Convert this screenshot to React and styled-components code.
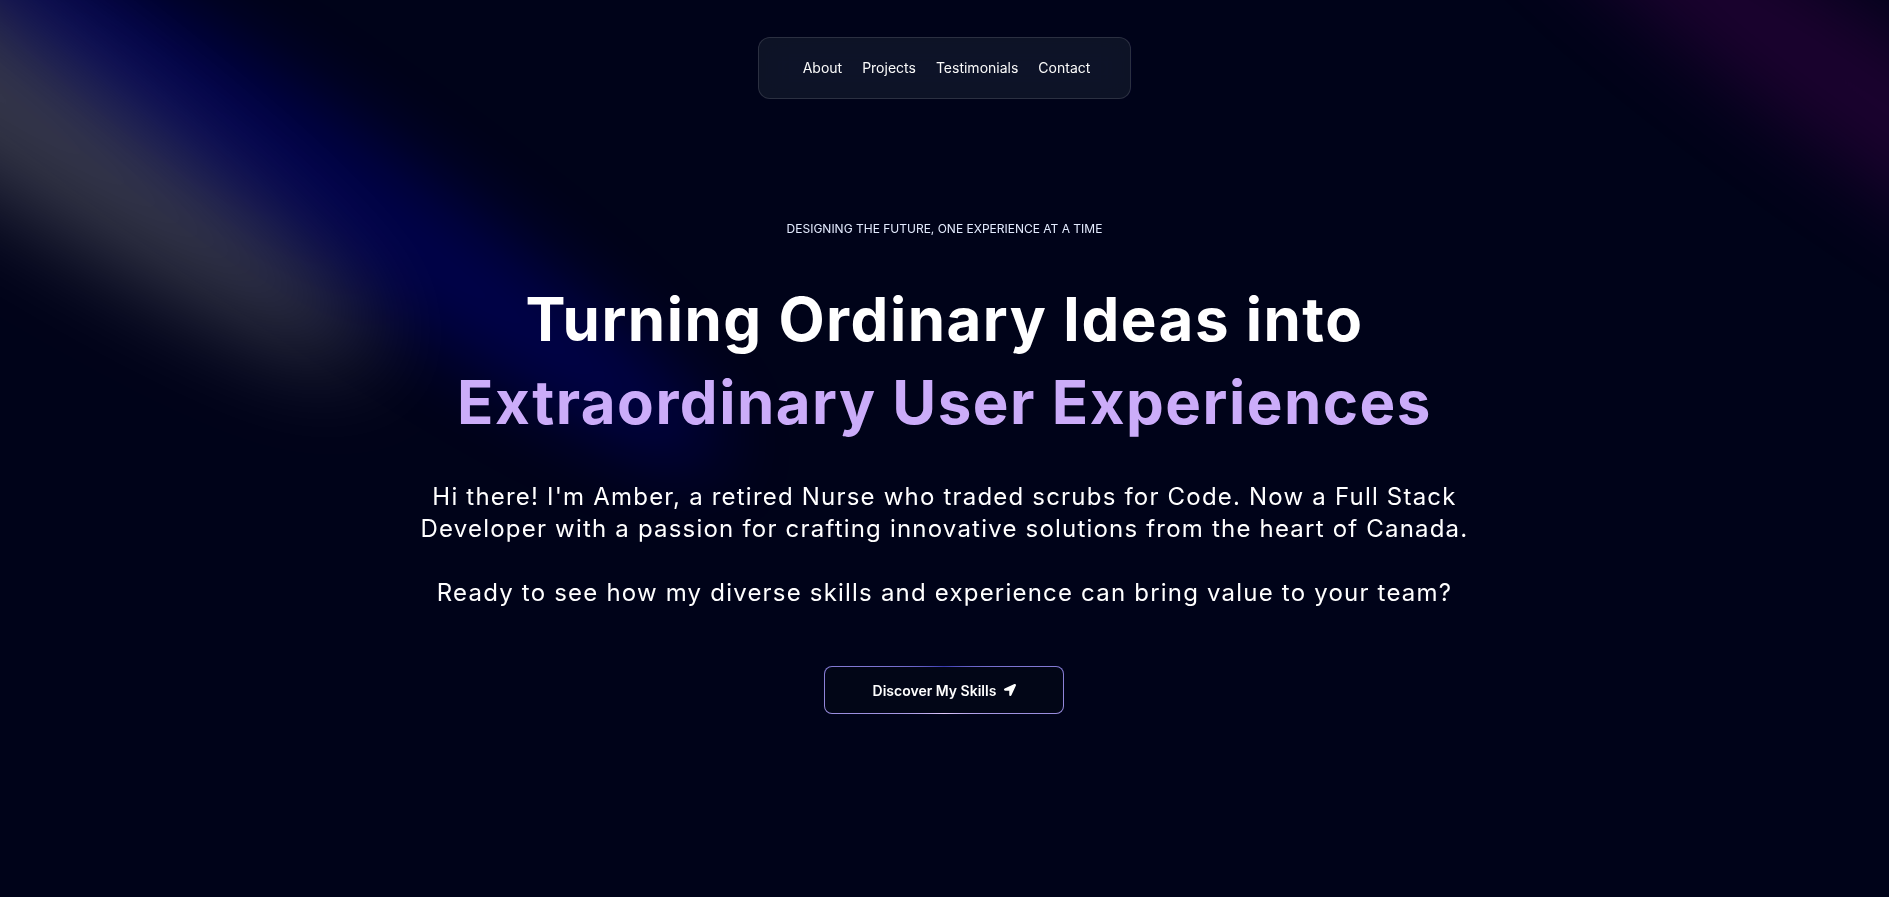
import React from 'react';
import styled, { createGlobalStyle } from 'styled-components';
import { FaLocationArrow } from 'react-icons/fa';

const GlobalStyle = createGlobalStyle`
    * {
        box-sizing: border-box;
    }
    html, body {
        margin: 0;
        padding: 0;
        background: #000319;
    }
    body {
        font-family: Inter, "Noto Sans", sans-serif;
        color: #fff;
    }
`;

const Page = styled.main`
    position: relative;
    width: 100%;
    height: 100vh;
    overflow: hidden;
    background: #000319;
    display: flex;
    flex-direction: column;
    align-items: center;
`;

const SpotSvg = styled.svg`
    position: absolute;
    z-index: 1;
    pointer-events: none;
    top: ${({ $top }) => $top};
    left: ${({ $left }) => $left};
    width: 84%;
    height: ${({ $h }) => $h};
    transform: translate(-50%, -40%);
`;

const Nav = styled.nav`
    position: relative;
    z-index: 20;
    margin-top: 37px;
    display: flex;
    align-items: center;
    justify-content: center;
    gap: 20px;
    padding: 20px 40px 20px 44px;
    border: 1px solid rgba(255, 255, 255, 0.125);
    border-radius: 12px;
    background: rgba(17, 25, 40, 0.75);
    backdrop-filter: blur(16px) saturate(180%);
`;

const NavLink = styled.a`
    font-size: 14px;
    line-height: 20px;
    color: #fafafa;
    text-decoration: none;
    cursor: pointer;
`;

const Hero = styled.section`
    position: relative;
    z-index: 10;
    display: flex;
    flex-direction: column;
    align-items: center;
    max-width: 60vw;
    margin-top: 122px;
`;

const Tagline = styled.p`
    margin: 0;
    font-size: 12px;
    line-height: 16px;
    text-transform: uppercase;
    text-align: center;
    color: #e4ecff;
`;

const Heading = styled.h1`
    margin: 41px 0 0;
    font-size: 60px;
    font-weight: 700;
    line-height: 1.375;
    letter-spacing: 0.025em;
    text-align: center;
    color: #fff;
`;

const Accent = styled.span`
    color: #cbacf9;
`;

const Intro = styled.p`
    margin: 38px 0 0;
    font-size: 24px;
    line-height: 32px;
    letter-spacing: 0.05em;
    text-align: center;
    color: #fff;
`;

const MagicButton = styled.button`
    position: relative;
    margin-top: 57px;
    width: 240px;
    height: 48px;
    padding: 1px;
    border: none;
    border-radius: 8px;
    overflow: hidden;
    cursor: pointer;
    background: conic-gradient(from 180deg at 50% 50%, #e2cbff 0%, #393bb2 50%, #e2cbff 100%);
`;

const ButtonInner = styled.span`
    display: flex;
    align-items: center;
    justify-content: center;
    gap: 8px;
    width: 100%;
    height: 100%;
    padding: 0 28px;
    border-radius: 7px;
    background: #020617;
    color: #fff;
    font-family: Inter, sans-serif;
    font-size: 14px;
    font-weight: 600;
`;

const Spotlight = ({ id, fill, top, left, h }) => (
    <SpotSvg $top={top} $left={left} $h={h} viewBox="0 0 3787 2842" fill="none" xmlns="http://www.w3.org/2000/svg">
        <g filter={`url(#${id})`}>
            <ellipse
                cx="1924.71"
                cy="273.501"
                rx="1924.71"
                ry="273.501"
                transform="matrix(-0.822377 -0.568943 -0.568943 0.822377 3631.88 2291.09)"
                fill={fill}
                fillOpacity="0.21"
            />
        </g>
        <defs>
            <filter
                id={id}
                x="0.860352"
                y="0.838989"
                width="3785.16"
                height="2840.26"
                filterUnits="userSpaceOnUse"
                colorInterpolationFilters="sRGB"
            >
                <feFlood floodOpacity="0" result="BackgroundImageFix" />
                <feBlend mode="normal" in="SourceGraphic" in2="BackgroundImageFix" result="shape" />
                <feGaussianBlur stdDeviation="151" result="blur" />
            </filter>
        </defs>
    </SpotSvg>
);

const navItems = ['About', 'Projects', 'Testimonials', 'Contact'];

const App = () => {
    return (
        <Page>
            <GlobalStyle />
            <Spotlight id="spot-white" fill="white" top="-80px" left="-128px" h="100vh" />
            <Spotlight id="spot-purple" fill="purple" top="40px" left="100%" h="80vh" />
            <Spotlight id="spot-blue" fill="blue" top="112px" left="320px" h="80vh" />

            <Nav>
                {navItems.map((item) => (
                    <NavLink key={item}>{item}</NavLink>
                ))}
            </Nav>

            <Hero>
                <Tagline>Designing the future, one experience at a time</Tagline>
                <Heading>
                    Turning Ordinary Ideas into <Accent>Extraordinary User Experiences</Accent>
                </Heading>
                <Intro>
                    Hi there! I'm Amber, a retired Nurse who traded scrubs for Code. Now a Full Stack Developer with a passion for crafting innovative solutions from the heart of Canada.
                    <br />
                    <br />
                    Ready to see how my diverse skills and experience can bring value to your team?
                </Intro>
                <MagicButton>
                    <ButtonInner>
                        Discover My Skills
                        <FaLocationArrow size={12} />
                    </ButtonInner>
                </MagicButton>
            </Hero>
        </Page>
    );
};

export default App;
